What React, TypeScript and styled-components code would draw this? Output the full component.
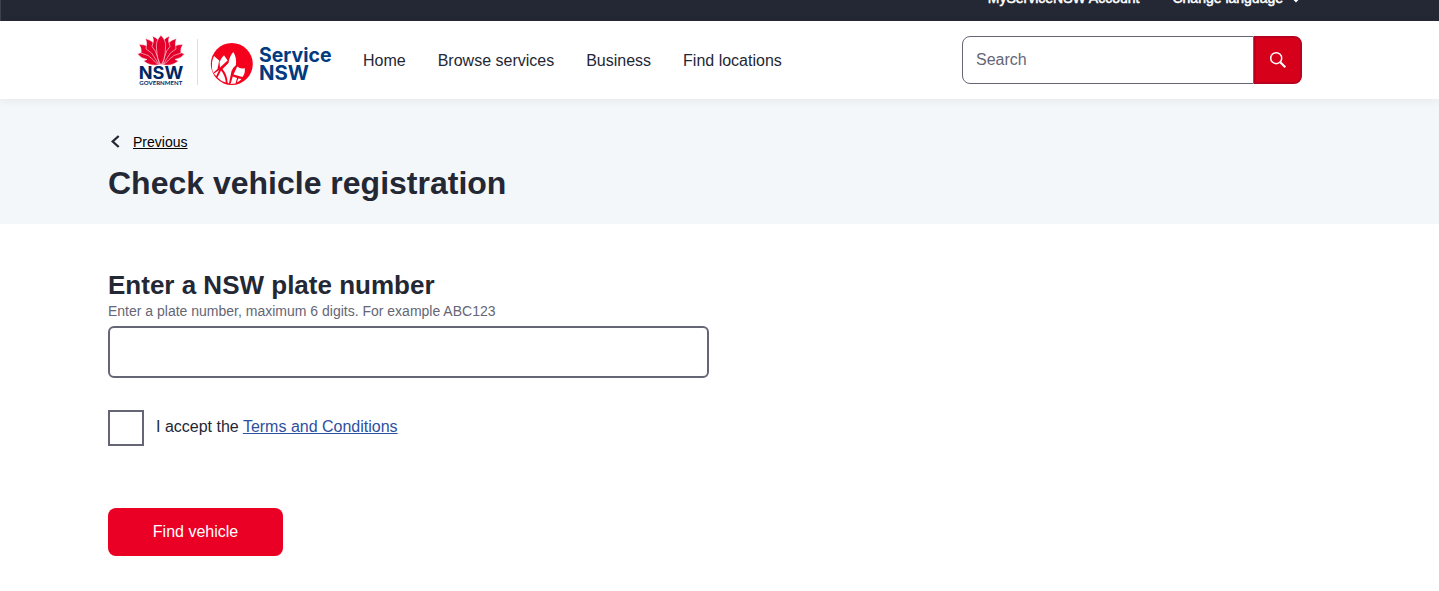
import React from "react";
import styled, { createGlobalStyle } from "styled-components";

const Global = createGlobalStyle`
  * { box-sizing: border-box; }
  body { margin: 0; background: #fff; color: #242734; overflow: hidden;
    font-family: "Liberation Sans", Arial, sans-serif; font-size: 16px; line-height: 24px; }
`;
const TopBar = styled.div`
  height: 21px; background: #242834; border-left: 1px solid #3d424e;
  display: flex; justify-content: flex-end; align-items: flex-start; gap: 33px;
  padding-right: 138px; overflow: hidden;
`;
const TopLink = styled.a`
  display: flex; align-items: center; gap: 8px; margin-top: -14px;
  color: #fff; font-size: 14px; line-height: 24px; -webkit-text-stroke: 0.5px #fff;
  svg { position: relative; top: 1px; }
`;
const Header = styled.header`
  position: relative; height: 78px; background: #fff; display: flex; align-items: center;
  padding: 0 137px 0 136px; box-shadow: 0 2px 8px rgba(36, 41, 52, 0.06);
`;
const Logo = styled.svg`
  display: block; flex: none;
`;
const Nav = styled.nav`
  display: flex; gap: 32px; margin-left: 27px; flex: 1; padding-top: 2px;
`;
const NavLink = styled.a`
  color: #242734;
`;
const SearchForm = styled.form`
  display: flex; width: 340px; height: 48px;
`;
const SearchInput = styled.input`
  width: 292px; border: 1px solid #646676; border-radius: 8px 0 0 8px; padding: 0 13px;
  font: inherit; background: #fff; outline: none;
  &::placeholder { color: #646676; opacity: 1; }
`;
const SearchButton = styled.button`
  width: 48px; border: 2px solid #b8001f; border-radius: 0 8px 8px 0; background: #d7001a;
  display: flex; align-items: center; justify-content: center; padding: 0;
`;
const Hero = styled.section`
  height: 125px; background: #f3f7fa; padding: 31px 108px 0;
`;
const BackLink = styled.a`
  display: flex; align-items: center; gap: 10px; font-size: 14px; line-height: 24px; color: #000;
  span { text-decoration: underline; text-underline-offset: 1px; }
`;
const Title = styled.h1`
  margin: 9px 0 0; font-size: 32px; line-height: 40px;
`;
const Main = styled.main`
  padding: 45px 108px 0; display: flex; flex-direction: column; align-items: flex-start;
`;
const Label = styled.h2`
  margin: 0; font-size: 26px; line-height: 32px;
`;
const Hint = styled.p`
  margin: 0; font-size: 14px; line-height: 21px; color: #646676;
`;
const PlateInput = styled.input`
  width: 601px; height: 52px; margin-top: 4px; border: 2px solid #646676; border-radius: 6px;
  background: #fff; padding: 0 14px; font: inherit;
`;
const Terms = styled.label`
  display: flex; gap: 12px; margin-top: 32px; height: 36px; line-height: 34px;
`;
const Checkbox = styled.input`
  appearance: none; width: 36px; height: 36px; margin: 0; border: 2px solid #646676; background: #fff;
`;
const TermsLink = styled.a`
  color: #2e4fa0; text-decoration: underline; text-underline-offset: 1px;
`;
const Submit = styled.button`
  width: 175px; height: 48px; margin-top: 62px; border: 0; border-radius: 8px;
  background: #eb0025; color: #fff; font: inherit; padding: 0;
`;

function BrandLogo() {
  return (
    <Logo width="200" height="56" viewBox="136 32 200 56" role="img" aria-label="Service NSW">
      <g fill="#e4002b" stroke="#fff" strokeWidth="0.55">
        <path d="M137.500 54Q144 50.500 150 54.500L160 64.500Q151 67 143.500 61Q145 60 147 59.500Q141 58.500 137.500 54Z" />
        <path d="M184.500 54Q178 50.500 172 54.500L162 64.500Q171 67 178.500 61Q177 60 175 59.500Q181 58.500 184.500 54Z" />
        <path d="M138.800 44.500Q149 44.500 154 50L160 64.500Q156 64 153.500 60Q149 54.500 141 53Q142 48 138.800 44.500Z" />
        <path d="M183.200 44.500Q173 44.500 168 50L162 64.500Q166 64 168.500 60Q173 54.500 181 53Q180 48 183.200 44.500Z" />
        <path d="M145.500 38.500Q154 41 158 48L161 64.500Q157.500 64 155.500 59Q152.500 52 146 49Q147.500 43 145.500 38.500Z" />
        <path d="M176.500 38.500Q168 41 164 48L161 64.500Q164.500 64 166.500 59Q169.500 52 176 49Q174.500 43 176.500 38.500Z" />
        <path d="M152.500 36Q159.500 39 161 45V64.500Q158.500 63.500 157.500 57Q156 50.500 152 46.500Q154.500 41 152.500 36Z" />
        <path d="M169.500 36Q162.500 39 161 45V64.500Q163.500 63.500 164.500 57Q166 50.500 170 46.500Q167.500 41 169.500 36Z" />
        <path d="M161 35.300Q166.500 40.500 165.500 48Q165 60 161 65Q157 60 156.500 48Q155.500 40.500 161 35.300Z" />
      </g>
      <text x="138.800" y="78.800" fill="#002664" fontFamily="Inter, sans-serif" fontWeight="700" fontSize="17.500" textLength="44.500" lengthAdjust="spacingAndGlyphs">NSW</text>
      <text x="139.300" y="85.200" fill="#002664" fontFamily="Lato, sans-serif" fontWeight="700" fontSize="5.800" textLength="43" lengthAdjust="spacingAndGlyphs">GOVERNMENT</text>
      <path d="M197.500 39V85" stroke="#dcdfe3" />
      <circle cx="231.800" cy="64" r="21" fill="#f5001d" />
      <g fill="#fff">
        <path d="M214 56L219.200 60.500L217.500 69L213 73Q211.300 68 212 62.500Q212.500 59 214 56Z" />
        <path d="M224 55.200L227.600 60.500L220 67.500L219.500 62Q221 58 224 55.200Z" />
        <path d="M233.300 52Q236.800 57.500 236 65Q233.500 67 231.500 71L229 83.500L227.500 82.500Q227.500 75 222.500 69L228.500 63Q229.500 56 233.300 52Z" />
        <path d="M221 70.500Q225 75 225.800 82.500Q221 81.500 217.500 77.500Z" />
        <path d="M219.200 70L216.200 76Q214.500 74.500 214 73.500Z" />
        <path d="M237.200 66.500Q241 69.500 244.700 68Q245.500 73.500 242.500 77L233.500 74.500Z" />
        <path d="M232.800 76.500L237 78L235.500 83.500L230.500 84Z" />
        <path d="M238.300 78.500L241.500 79Q239.500 81.500 236.800 82.500Z" />
      </g>
      <g fill="#003a80" fontFamily="Inter, sans-serif" fontWeight="700" fontSize="19.500">
        <text x="259" y="62.200" textLength="72.500" lengthAdjust="spacingAndGlyphs">Service</text>
        <text x="259" y="79.800" textLength="50" lengthAdjust="spacingAndGlyphs">NSW</text>
      </g>
    </Logo>
  );
}

export default function App() {
  return (
    <>
      <Global />
      <TopBar>
        <TopLink>MyServiceNSW Account</TopLink>
        <TopLink>
          Change language
          <svg width="10" height="8" viewBox="0 0 10 8" fill="none" stroke="#fff" strokeWidth="2"><path d="M1 2l4 4 4-4" /></svg>
        </TopLink>
      </TopBar>
      <Header>
        <BrandLogo />
        <Nav>
          <NavLink>Home</NavLink>
          <NavLink>Browse services</NavLink>
          <NavLink>Business</NavLink>
          <NavLink>Find locations</NavLink>
        </Nav>
        <SearchForm>
          <SearchInput placeholder="Search" />
          <SearchButton type="button" aria-label="Search">
            <svg width="18" height="18" viewBox="0 0 18 18" fill="none" stroke="#fff">
              <circle cx="7.200" cy="7.200" r="5.500" strokeWidth="1.500" />
              <path d="M11.300 11.300L16.300 16.300" strokeWidth="2.200" />
            </svg>
          </SearchButton>
        </SearchForm>
      </Header>
      <Hero>
        <BackLink>
          <svg width="15" height="14" viewBox="0 0 15 14" fill="none" stroke="#242734" strokeWidth="2.300"><path d="M10.700 1L4.700 6.500L10.700 12" /></svg>
          <span>Previous</span>
        </BackLink>
        <Title>Check vehicle registration</Title>
      </Hero>
      <Main>
        <Label>Enter a NSW plate number</Label>
        <Hint>Enter a plate number, maximum 6 digits. For example ABC123</Hint>
        <PlateInput aria-label="Plate number" />
        <Terms>
          <Checkbox type="checkbox" />
          <span>I accept the <TermsLink>Terms and Conditions</TermsLink></span>
        </Terms>
        <Submit>Find vehicle</Submit>
      </Main>
    </>
  );
}
